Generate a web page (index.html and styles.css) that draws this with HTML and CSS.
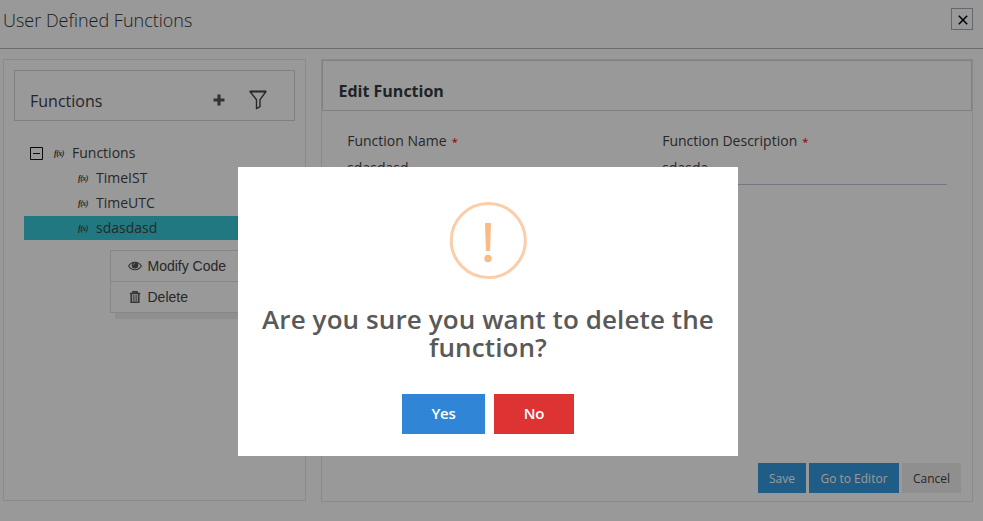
FILE: index.html
```html
<!DOCTYPE html>
<html lang="en">
<head>
<meta charset="utf-8">
<title>User Defined Functions</title>
<link rel="stylesheet" href="styles.css">
</head>
<body>
<header class="topbar">
  <h1 class="title">User Defined Functions</h1>
  <button class="close" aria-label="Close"><svg width="10" height="10" viewBox="0 0 10 10"><path d="M.8 .8l8.400 8.400M9.200 .8l-8.400 8.400" stroke="#000" stroke-width="1.500" fill="none"/></svg></button>
</header>
<main class="workspace">
  <section class="panel sidebar">
    <div class="side-head">
      <span class="side-title">Functions</span>
      <svg class="plus" width="12" height="12" viewBox="0 0 12 12"><path d="M6 .5v11M.5 6h11" stroke="#555" stroke-width="3.2"/></svg>
      <svg class="filter" width="18" height="20" viewBox="0 0 18 20"><path d="M1 1.5h16l-6 8.200v7L7.500 18.600V9.700z" stroke="#444" stroke-width="1.400" fill="none" stroke-linejoin="round"/><path d="M1 1.500h16" stroke="#444" stroke-width="1.800"/></svg>
    </div>
    <ul class="tree">
      <li class="node root"><svg class="toggle" width="13" height="13" viewBox="0 0 13 13"><path d="M.5.5h12v12H.5zM3 6.500h7" stroke="#111" fill="none"/></svg><i class="fx">f(x)</i><span class="node-label">Functions</span></li>
      <li class="node"><i class="fx">f(x)</i><span class="node-label">TimeIST</span></li>
      <li class="node"><i class="fx">f(x)</i><span class="node-label">TimeUTC</span></li>
      <li class="node selected"><i class="fx">f(x)</i><span class="node-label">sdasdasd</span></li>
    </ul>
    <div class="menu">
      <div class="menu-item"><svg width="14" height="12" viewBox="0 0 14 12"><path d="M.6 6C3.500 1 10.500 1 13.400 6 10.500 11 3.500 11 .6 6z" fill="none" stroke="#555" stroke-width="1.100"/><circle cx="7" cy="5.300" r="3.300" fill="#555"/><path d="M5.200 5.200A1.800 1.800 0 0 1 7 3.400" fill="none" stroke="#ddd" stroke-width=".7"/></svg><span>Modify Code</span></div>
      <div class="menu-item"><svg width="14" height="12" viewBox="0 0 14 12"><path d="M1.800 2.500h10.400M5 2.300V.8h4v1.500M3.200 2.500v8.800h7.600V2.500" fill="none" stroke="#555" stroke-width="1.500"/><path d="M5.300 4v6M7 4v6M8.700 4v6" stroke="#777" stroke-width="1"/></svg><span>Delete</span></div>
    </div>
  </section>
  <section class="panel editor">
    <h2 class="editor-head">Edit Function</h2>
    <div class="fields">
      <div class="field"><div class="label">Function Name <b class="req">*</b></div><div class="value">sdasdasd</div></div>
      <div class="field"><div class="label">Function Description <b class="req">*</b></div><div class="value">sdasda</div></div>
    </div>
    <div class="actions">
      <button class="btn save">Save</button>
      <button class="btn goto">Go to Editor</button>
      <button class="btn cancel">Cancel</button>
    </div>
  </section>
</main>
<div class="overlay">
  <div class="dialog" role="dialog">
    <svg class="warn" width="78" height="78" viewBox="0 0 78 78"><circle cx="39.300" cy="39.500" r="37" fill="none" stroke="#facea8" stroke-width="3"/><path d="M36 22h6l-.9 28h-4.200z" fill="#f8bb86"/><circle cx="39" cy="57.500" r="3.700" fill="#f8bb86"/></svg>
    <h2 class="question">Are you sure you want to delete the function?</h2>
    <div class="choices">
      <button class="choice yes">Yes</button>
      <button class="choice no">No</button>
    </div>
  </div>
</div>
</body>
</html>
```

FILE: styles.css
```css
* { box-sizing: border-box; }
body {
  margin: 0;
  width: 983px;
  height: 521px;
  overflow: hidden;
  background: #fff;
  color: #444;
  font-family: "Open Sans", sans-serif;
}
button { border: 0; padding: 0; font-family: inherit; }
h1, h2 { margin: 0; }
.topbar {
  display: flex;
  justify-content: space-between;
  align-items: flex-start;
  height: 49px;
  padding: 8px 10px 0 3px;
  border-bottom: 1px solid #b4b4b4;
}
.title { font-size: 18px; line-height: 25px; font-weight: 300; color: #333; }
.close {
  display: flex;
  align-items: center;
  justify-content: center;
  width: 22px;
  height: 22px;
  padding: 1px 0 0 1px;
  border: 1px solid #a5adb8;
  background: #fff;
}
.workspace {
  display: flex;
  align-items: flex-start;
  gap: 15px;
  padding: 10px 0 0 3px;
}
.panel { border: 1px solid #e6e6e6; }
.sidebar { width: 303px; height: 442px; padding: 10px; }
.side-head {
  display: flex;
  align-items: center;
  width: 281px;
  height: 51px;
  padding: 11px 27px 0 15px;
  border: 1px solid #d5d5d5;
}
.side-title { flex: 1; font-size: 16px; color: #3d3d48; }
.plus { margin: -3px 24px 0 0; }
.filter { margin-top: -3px; }
.tree { margin: 20px 0 0; padding: 0 0 0 10px; list-style: none; }
.node {
  display: flex;
  align-items: center;
  height: 24px;
  margin: 0 0 1px;
  padding-left: 54px;
  font-size: 14px;
}
.node-label { margin-top: -2px; }
.root { padding-left: 6px; }
.toggle { margin-right: 11px; }
.fx {
  width: 18px;
  font: italic bold 8px "Liberation Serif", serif;
  letter-spacing: -.5px;
  color: #444;
}
.selected { background: #37c8d5; }
.menu {
  width: 170px;
  margin: 10px 0 0 96px;
  border: 1px solid #e2e2e2;
  box-shadow: 5px 6px 0 #eee;
  background: #fff;
  font: 14px "Liberation Sans", sans-serif;
}
.menu-item {
  display: flex;
  align-items: center;
  gap: 5.5px;
  height: 30px;
  padding-left: 17px;
}
.menu-item + .menu-item { height: 31px; border-top: 1px solid #e2e2e2; }
.editor {
  display: flex;
  flex-direction: column;
  width: 652px;
  height: 443px;
}
.editor-head {
  height: 51px;
  padding: 19px 15.5px 0;
  border: 1px solid #d5d5d5;
  font-size: 16px;
  line-height: 22px;
  font-weight: 700;
  color: #333b42;
}
.fields { display: flex; gap: 30px; padding: 20px 25px 0; }
.field { width: 285px; }
.label { padding-left: .2px; font-size: 14px; line-height: 20px; }
.req { margin-left: 1.5px; font-size: 11px; font-weight: 400; color: #d00; }
.value {
  height: 33px;
  padding: 6px 0 0 .2px;
  border-bottom: 1px solid #c0c6d8;
  font-size: 14px;
  line-height: 20px;
}
.actions {
  display: flex;
  justify-content: flex-end;
  gap: 3px;
  margin-top: auto;
  padding: 0 11px 8px;
}
.btn { height: 30px; font-size: 12px; color: #fff; background: #3599df; }
.save { width: 48px; }
.goto { width: 90px; }
.cancel { width: 59px; color: #444; background: #eee; }
.overlay {
  position: absolute;
  inset: 0;
  padding: 167px 0 0 238px;
  background: rgba(0, 0, 0, .4);
}
.dialog {
  display: flex;
  flex-direction: column;
  align-items: center;
  width: 500px;
  height: 289px;
  padding-top: 34px;
  background: #fff;
}
.question {
  width: 470px;
  margin-top: 26px;
  text-align: center;
  font-size: 26px;
  line-height: 28px;
  letter-spacing: .1px;
  font-weight: 600;
  color: #595959;
}
.choices { display: flex; gap: 9px; margin-top: 33px; }
.choice { height: 40px; padding-bottom: 2px; font-size: 15px; letter-spacing: -.2px; font-weight: 600; color: #fff; }
.yes { width: 83px; background: #3085d6; }
.no { width: 80px; background: #d33; }
```
